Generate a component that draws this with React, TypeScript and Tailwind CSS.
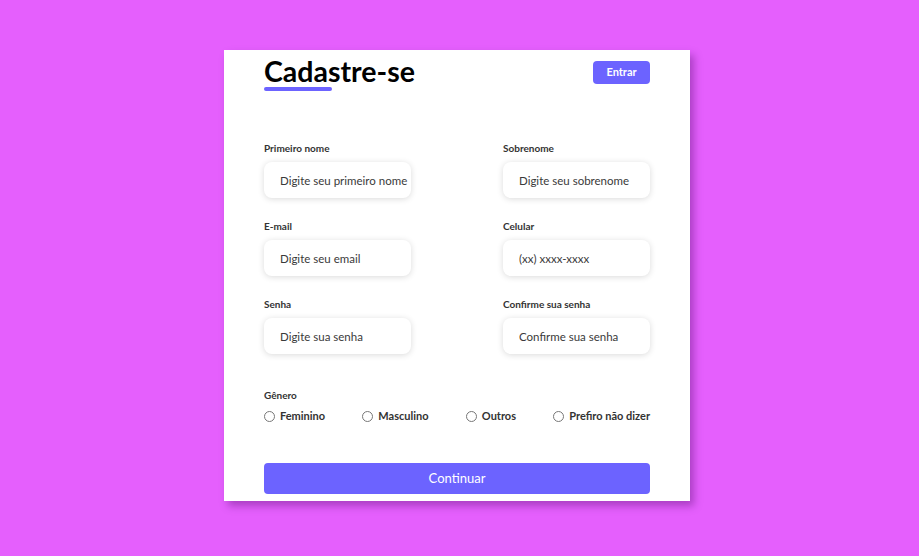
import { useState } from 'react';

const fields = [
  { label: 'Primeiro nome', placeholder: 'Digite seu primeiro nome', type: 'text' },
  { label: 'Sobrenome', placeholder: 'Digite seu sobrenome', type: 'text' },
  { label: 'E-mail', placeholder: 'Digite seu email', type: 'email' },
  { label: 'Celular', placeholder: '(xx) xxxx-xxxx', type: 'tel' },
  { label: 'Senha', placeholder: 'Digite sua senha', type: 'password' },
  { label: 'Confirme sua senha', placeholder: 'Confirme sua senha', type: 'password' },
];

const genders = ['Feminino', 'Masculino', 'Outros', 'Prefiro não dizer'];

export default function App() {
  const [gender, setGender] = useState('');

  return (
    <div className="min-h-screen w-full bg-[#e55ffd] flex items-center justify-center font-['Lato',sans-serif]">
      <div className="w-[466px] h-[451px] bg-white shadow-[4px_5px_8px_rgba(60,0,90,0.35)] px-10 pt-[4px] mr-[5px] mb-[5px]">
        {/* Header */}
        <div className="flex items-start justify-between">
          <div>
            <h1 className="text-[28.5px] leading-[34px] font-bold text-black">Cadastre-se</h1>
            <div className="w-[68px] h-[4px] rounded-full bg-[#6c63ff] mt-[-1px]" />
          </div>
          <button className="mt-[7px] w-[57px] h-[23px] rounded-[4px] bg-[#6c63ff] text-white text-[11px] font-bold">
            Entrar
          </button>
        </div>

        {/* Inputs */}
        <div className="mt-[50px] grid grid-cols-[147px_147px] justify-between gap-y-[21px]">
          {fields.map((f) => (
            <div key={f.label} className="flex flex-col">
              <label className="text-[10px] leading-[14px] font-bold text-[#333]">{f.label}</label>
              <input
                type={f.type === 'password' ? 'password' : 'text'}
                placeholder={f.placeholder}
                className="mt-[7px] w-[147px] h-[36px] rounded-[8px] bg-white pl-[16px] pr-0 text-[11.5px] text-[#333] placeholder-[#3a3a3a] shadow-[0_1px_6px_rgba(0,0,0,0.15)] outline-none"
              />
            </div>
          ))}
        </div>

        {/* Genero */}
        <div className="mt-[34px]">
          <div className="text-[10px] leading-[14px] font-bold text-[#333]">Gênero</div>
          <div className="mt-[7px] flex items-center justify-between">
            {genders.map((g) => (
              <label key={g} className="flex items-center gap-[5px] cursor-pointer">
                <span
                  onClick={() => setGender(g)}
                  className="w-[11px] h-[11px] rounded-full border border-[#777] bg-white flex items-center justify-center"
                >
                  {gender === g && <span className="w-[5px] h-[5px] rounded-full bg-[#6c63ff]" />}
                </span>
                <span onClick={() => setGender(g)} className="text-[11px] leading-[14px] font-bold text-[#333]">
                  {g}
                </span>
              </label>
            ))}
          </div>
        </div>

        <button className="mt-[40px] w-full h-[31px] rounded-[4px] bg-[#6c63ff] text-white text-[13px]">
          Continuar
        </button>
      </div>
    </div>
  );
}
